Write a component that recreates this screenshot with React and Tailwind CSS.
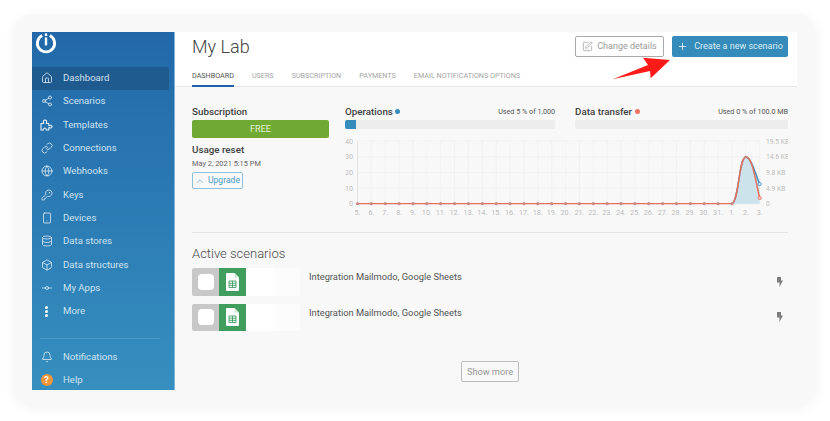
import React from "react";
import { Home, Share2, Link, Globe, KeyRound, Smartphone, Database, Box, GitCommitHorizontal, Bell, SquarePen, Plus, ChevronUp } from "lucide-react";

function PuzzleIcon() {
  return (
    <svg width="13" height="12" viewBox="0 0 13 12" fill="none" stroke="currentColor" strokeWidth="1.1" strokeLinejoin="round">
      <path d="M1 4.5H3.5C3.7 4.5 3.8 4 3.4 3.4C3 2.5 3.6 1 5 1C6.4 1 7 2.5 6.6 3.4C6.2 4 6.3 4.5 6.5 4.5H8.8V6.4C8.8 6.8 9.4 6.7 9.9 6.4C10.8 6 12 6.5 12 7.6C12 8.7 10.8 9.2 9.9 8.8C9.4 8.5 8.8 8.4 8.8 8.8V11H6.4C6.4 9.8 5.8 9 4.9 9C4 9 3.4 9.8 3.4 11H1Z" />
    </svg>
  );
}

const items = [
  ["Dashboard", Home, true], ["Scenarios", Share2], ["Templates", PuzzleIcon], ["Connections", Link],
  ["Webhooks", Globe], ["Keys", KeyRound], ["Devices", Smartphone], ["Data stores", Database],
  ["Data structures", Box], ["My Apps", GitCommitHorizontal],
];

function NavRow({ label, Icon, active, children }) {
  return (
    <div className={`flex h-[23.33px] shrink-0 items-center rounded-r-[2px] ${active ? "bg-[#1f5b8e]" : ""}`}>
      <div className="flex w-[31px] justify-center pr-[2px] text-[#e8f2f9]">
        {Icon ? <Icon size={12} strokeWidth={1.5} /> : children}
      </div>
      <span className="text-[9.6px] text-[#cfe2f0]">{label}</span>
    </div>
  );
}

const xLabels = [5,6,7,8,9,10,11,12,13,14,15,16,17,18,19,20,21,22,23,24,25,26,27,28,29,30,31,1,2,3];
const X0 = 12.5, STEP = 13.87, Y0 = 68.7, Y40 = 6;

function Chart() {
  const xs = xLabels.map((_, i) => X0 + i * STEP);
  const hs = [0, 1, 2, 3, 4].map((i) => Y40 + (i * (Y0 - Y40)) / 4);
  const xa = xs[27], xb = xs[28], xc = xs[29];
  const blue = `M${xa} ${Y0} C${xa + 7} ${Y0 - 3} ${xb - 7} 22 ${xb} 22 C${xb + 5} 22 ${xc - 5} 37 ${xc} 49`;
  const red = `M${xa} ${Y0} C${xa + 7} ${Y0 - 3} ${xb - 7} 22 ${xb} 22 C${xb + 7} 22 ${xc - 4} 48 ${xc} 63`;
  return (
    <svg width="443" height="86" viewBox="0 0 443 86" className="block" style={{ fontFamily: "Roboto, sans-serif" }}>
      {hs.map((y) => <line key={y} x1={X0} x2={xs[29]} y1={y} y2={y} stroke={y === Y0 ? "#dddddd" : "#efefef"} strokeWidth="0.7" />)}
      {xs.map((x) => <line key={x} x1={x} x2={x} y1={Y40} y2={Y0} stroke="#efefef" strokeWidth="0.7" />)}
      <line x1={X0} x2={X0} y1={Y40} y2={Y0} stroke="#e4e4e4" strokeWidth="1" />
      {[40, 30, 20, 10, 0].map((v, i) => <text key={v} x={v === 0 ? 4 : 0} y={hs[i] + 2.5} fontSize="7.2" fill="#bdbdbd">{v}</text>)}
      {["19.5 KB", "14.6 KB", "9.8 KB", "4.9 KB", "0"].map((v, i) => <text key={v} x="421" y={hs[i] + 2.5} fontSize="6.7" fill="#bdbdbd">{v}</text>)}
      {xLabels.map((v, i) => <text key={i} x={xs[i]} y="79.5" fontSize="7.2" fill="#bdbdbd" textAnchor="middle">{v}.</text>)}
      <path d={`${blue} L${xc} ${Y0} Z`} fill="#cde3ec" />
      <path d={blue} fill="none" stroke="#3b8fbe" strokeWidth="1.5" />
      <line x1={X0} x2={xa} y1={Y0} y2={Y0} stroke="#e8705f" strokeWidth="1.2" />
      <path d={red} fill="none" stroke="#e8705f" strokeWidth="1.5" />
      {xs.slice(0, 28).map((x) => <circle key={x} cx={x} cy={Y0} r="1.6" fill="#c98a85" />)}
      <circle cx={xb} cy="22" r="1.6" fill="#c98a85" />
      <circle cx={xc} cy="49" r="1.6" fill="#d8e9f2" stroke="#3b8fbe" strokeWidth="0.8" />
      <circle cx={xc} cy="63" r="1.6" fill="#f3c6bf" stroke="#e8705f" strokeWidth="0.8" />
    </svg>
  );
}

function Sheets() {
  return (
    <svg width="13" height="18" viewBox="0 0 13 18">
      <path d="M1 0h7.5L13 4.5V17a1 1 0 0 1-1 1H1a1 1 0 0 1-1-1V1a1 1 0 0 1 1-1z" fill="#ffffff" />
      <path d="M8.5 0L13 4.5H8.5z" fill="#cfe6d8" />
      <path d="M3 8h7v6.5H3z M3 10.2h7 M3 12.3h7 M6.5 8v6.5" fill="none" stroke="#3f9f62" strokeWidth="0.9" />
    </svg>
  );
}

function ScenarioRow() {
  return (
    <div className="flex h-[27.5px]">
      <div className="flex w-[108px] overflow-hidden rounded-[2px]">
        <div className="flex w-[27px] items-center justify-center bg-[#c8c8c8]">
          <div className="h-[16px] w-[16px] rounded-[4px] bg-white" />
        </div>
        <div className="flex w-[27px] items-center justify-center bg-[#419d5e]"><Sheets /></div>
        <div className="w-[27px] bg-white" />
        <div className="w-[27px] bg-[#fcfcfc]" />
      </div>
      <div className="ml-[9px] flex-1 pt-[3px] text-[9.3px] leading-[12px] text-[#555555]">Integration Mailmodo, Google Sheets</div>
      <div className="flex w-[12px] items-center">
        <svg width="7" height="10" viewBox="0 0 7 10"><path d="M1 0h4v3.5h2L3.5 10V5.5H1z" fill="#7d7d7d" /></svg>
      </div>
    </div>
  );
}

export default function App() {
  return (
    <div className="h-[421px] w-[830px] overflow-hidden bg-white p-[15px]" style={{ fontFamily: "Roboto, 'Liberation Sans', sans-serif" }}>
      <div className="h-[390px] w-[800px] rounded-[16px] bg-[#f8f8f8] p-[17px] shadow-[0_2px_14px_rgba(0,0,0,0.06)]">
        <div className="relative flex h-[358px] w-[765px]">
          <aside className="flex w-[143px] shrink-0 flex-col overflow-hidden border-r border-[#7fb2d4] bg-gradient-to-b from-[#2268a9] to-[#368fbf] pr-[5px]">
            <div className="h-[34.5px] shrink-0">
              <svg width="22" height="22" viewBox="0 0 22 22" className="ml-[3px]">
                <path d="M7.2 3.6 A8.6 8.6 0 1 0 14.8 3.6" fill="none" stroke="#ffffff" strokeWidth="2.8" />
                <rect x="9.8" y="1.4" width="2.4" height="2.6" fill="#ffffff" />
                <rect x="9.8" y="5.4" width="2.4" height="8" fill="#ffffff" />
              </svg>
            </div>
            {items.map(([l, I, a]) => <NavRow key={l} label={l} Icon={I} active={a} />)}
            <NavRow label="More">
              <div className="flex flex-col gap-[1.5px]">
                <div className="h-[2.5px] w-[2.5px] rounded-full bg-white" />
                <div className="h-[2.5px] w-[2.5px] rounded-full bg-white" />
                <div className="h-[2.5px] w-[2.5px] rounded-full bg-white" />
              </div>
            </NavRow>
            <div className="ml-[8px] mr-[9px] mt-[15px] mb-[6px] shrink-0 border-t border-[#4a9cc9]" />
            <NavRow label="Notifications" Icon={Bell} />
            <NavRow label="Help">
              <div className="flex h-[12px] w-[12px] items-center justify-center rounded-full bg-[#f0953a] text-[9px] font-bold leading-none text-white">?</div>
            </NavRow>
          </aside>

          <main className="min-w-0 flex-1">
            <header className="h-[55px] border-b border-[#e8e8e8] bg-white pl-[17px] pr-[9px]">
              <div className="flex h-[34px] items-start justify-between">
                <h1 className="pt-[4px] text-[18px] font-light leading-[22px] text-[#444444]">My Lab</h1>
                <div className="flex gap-[8px] pt-[4px]">
                  <button className="flex h-[21px] w-[89px] items-center justify-center gap-[4px] rounded-[2px] border border-[#aaaaaa] bg-white text-[9px] text-[#9a9a9a]">
                    <SquarePen size={11} strokeWidth={1.3} className="text-[#888888]" /> Change details
                  </button>
                  <button className="flex h-[21px] w-[116px] items-center justify-center gap-[6px] rounded-[2px] bg-[#358cbb] text-[9px] text-[#dcecf5]">
                    <Plus size={11} strokeWidth={1.6} className="text-white" /> Create a new scenario
                  </button>
                </div>
              </div>
              <nav className="flex h-[21px] gap-[18px] text-[7.2px] text-[#a6a6a6]">
                <span className="flex h-[21px] items-center border-b-2 border-[#1e63a8] pt-[1px] text-[#555555]">DASHBOARD</span>
                <span className="pt-[5px]">USERS</span>
                <span className="pt-[5px]">SUBSCRIPTION</span>
                <span className="pt-[5px]">PAYMENTS</span>
                <span className="pt-[5px]">EMAIL NOTIFICATIONS OPTIONS</span>
              </nav>
            </header>

            <section className="pl-[17px] pr-[9px] pt-[18px]">
              <div className="flex h-[127px]">
                <div className="w-[137px]">
                  <div className="h-[14px] text-[9.8px] font-medium leading-[13px] text-[#3f3f3f]">Subscription</div>
                  <div className="mt-[1px] flex h-[18px] items-center justify-center rounded-[2px] bg-[#70aa35] text-[9.2px] text-[#e4f2d6]">FREE</div>
                  <div className="mt-[5px] text-[9.8px] font-medium leading-[13px] text-[#3f3f3f]">Usage reset</div>
                  <div className="mt-[2px] text-[7.4px] leading-[11px] text-[#666666]">May 2, 2021 5:15 PM</div>
                  <button className="mt-[3px] flex h-[17px] w-[51px] items-center justify-center gap-[3px] rounded-[2px] border border-[#8dc1dc] text-[8.6px] text-[#4d9cc6]">
                    <ChevronUp size={10} strokeWidth={1.5} /> Upgrade
                  </button>
                </div>
                <div className="ml-[16px] min-w-0 flex-1">
                  <div className="flex gap-[20px]">
                    <div className="w-[210px]">
                      <div className="flex h-[14px] items-start justify-between">
                        <span className="flex items-center gap-[2.5px] text-[9.8px] font-medium leading-[13px] text-[#3f3f3f]">Operations <i className="block h-[5px] w-[5px] rounded-full bg-[#358cbb]" /></span>
                        <span className="text-[7.2px] leading-[13px] text-[#555555]">Used 5 % of 1,000</span>
                      </div>
                      <div className="mt-[1px] h-[9px] overflow-hidden rounded-[2px] bg-[#ededed]"><div className="h-full w-[11px] bg-[#358cbb]" /></div>
                    </div>
                    <div className="w-[213px]">
                      <div className="flex h-[14px] items-start justify-between">
                        <span className="flex items-center gap-[2.5px] text-[9.8px] font-medium leading-[13px] text-[#3f3f3f]">Data transfer <i className="block h-[5px] w-[5px] rounded-full bg-[#ee7361]" /></span>
                        <span className="text-[7.2px] leading-[13px] text-[#555555]">Used 0 % of 100.0 MB</span>
                      </div>
                      <div className="mt-[1px] h-[9px] rounded-[2px] bg-[#ededed]" />
                    </div>
                  </div>
                  <div className="mt-[6px]"><Chart /></div>
                </div>
              </div>
              <div className="border-t border-[#e3e3e3]" />
              <h2 className="mt-[13px] text-[13px] font-light leading-[16px] text-[#4a4a4a]">Active scenarios</h2>
              <div className="mt-[6px] flex flex-col gap-[8px]">
                <ScenarioRow />
                <ScenarioRow />
              </div>
              <div className="mt-[30px] flex justify-center">
                <button className="h-[21px] w-[58px] rounded-[2px] border border-[#bbbbbb] text-[9.2px] text-[#999999]">Show more</button>
              </div>
            </section>
          </main>

          <svg className="absolute left-[575px] top-[22px]" width="65" height="30" viewBox="0 0 65 30">
            <path d="M5.7 25.3 L41 11 L36 3.7 L63 6 L43.7 24.3 L43 17 Z" fill="#ff1a1a" />
          </svg>
        </div>
      </div>
    </div>
  );
}
